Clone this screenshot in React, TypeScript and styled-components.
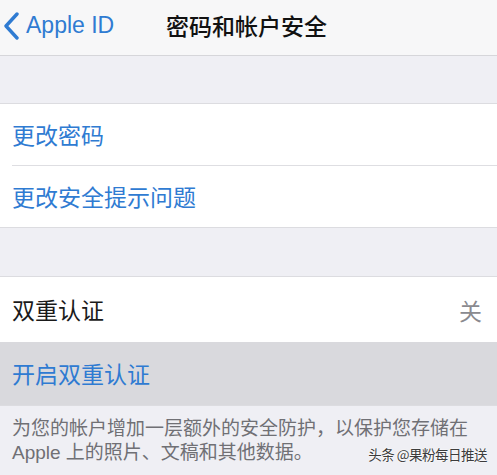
import React from "react";
import styled, { createGlobalStyle } from "styled-components";

const Global = createGlobalStyle`
  html, body { margin: 0; padding: 0; background: #efeff4; }
  body { font-family: "Liberation Sans", "Noto Sans CJK SC", sans-serif; width: 497px; height: 475px; overflow: hidden; }
  * { box-sizing: border-box; }
`;

const Screen = styled.div`
  position: relative;
  width: 497px;
  height: 475px;
  background: #efeff4;
  display: flex;
  flex-direction: column;
`;

const NavBar = styled.div`
  height: 56px;
  background: #f7f7f8;
  border-bottom: 1px solid #d6d6da;
  display: grid;
  grid-template-columns: 1fr auto 1fr;
  align-items: center;
`;

const Back = styled.div`
  display: flex;
  align-items: center;
  gap: 6px;
  padding-left: 3px;
  color: #2f7bd2;
  font-family: "Liberation Sans", sans-serif;
  font-size: 23px;
  margin-top: -4px;
`;

const Title = styled.div`
  font-family: "Noto Sans CJK SC", sans-serif;
  font-size: 23px;
  font-weight: 500;
  color: #111;
  margin-top: -6px;
  margin-left: -4px;
`;

const Gap = styled.div<{ $h: number }>`
  height: ${(p) => p.$h}px;
  flex-shrink: 0;
`;

const Group = styled.div`
  background: #fff;
  border-top: 1px solid #dcdce0;
  border-bottom: 1px solid #dcdce0;
  display: flex;
  flex-direction: column;
`;

const Row = styled.div<{ $h: number; $sel?: boolean; $divider?: boolean }>`
  height: ${(p) => p.$h}px;
  display: flex;
  align-items: center;
  justify-content: space-between;
  padding: 0 15px 0 12px;
  background: ${(p) => (p.$sel ? "#d9d9dd" : "#fff")};
  position: relative;
  ${(p) =>
    p.$divider
      ? `&::after { content: ""; position: absolute; left: 12px; right: 0; bottom: 0; height: 1px; background: #dedee2; }`
      : ""}
`;

const Label = styled.span<{ $blue?: boolean }>`
  font-family: "Noto Sans CJK SC", sans-serif;
  font-size: 23px;
  color: ${(p) => (p.$blue ? "#2f7bd2" : "#1a1a1a")};
  margin-top: -2px;
`;

const Value = styled.span`
  font-family: "Noto Sans CJK SC", sans-serif;
  font-size: 23px;
  color: #8a8a8f;
`;

const Footer = styled.div`
  padding: 11px 12px 0 12px;
  font-family: "Liberation Sans", "Noto Sans CJK SC", sans-serif;
  font-size: 19px;
  line-height: 24px;
  color: #707075;
`;

const Watermark = styled.div`
  position: absolute;
  right: 10px;
  bottom: 11px;
  font-family: "Noto Sans CJK SC", sans-serif;
  font-size: 13.5px;
  color: #3c3c3c;
  text-shadow: 0 0 2px #fff, 0 0 2px #fff;
  letter-spacing: -0.5px;
`;

export default function App() {
  return (
    <>
      <Global />
      <Screen>
        <NavBar>
          <Back>
            <svg width="17" height="28" viewBox="0 0 17 28">
              <path d="M14 2 L3 14 L14 26" fill="none" stroke="#2f7bd2" strokeWidth="3.4" strokeLinecap="round" strokeLinejoin="round" />
            </svg>
            Apple ID
          </Back>
          <Title>密码和帐户安全</Title>
          <div />
        </NavBar>
        <Gap $h={47} />
        <Group>
          <Row $h={62} $divider>
            <Label $blue>更改密码</Label>
          </Row>
          <Row $h={61}>
            <Label $blue>更改安全提示问题</Label>
          </Row>
        </Group>
        <Gap $h={48} />
        <Group>
          <Row $h={65}>
            <Label>双重认证</Label>
            <Value>关</Value>
          </Row>
          <Row $h={63} $sel>
            <Label $blue>开启双重认证</Label>
          </Row>
        </Group>
        <Footer>
          为您的帐户增加一层额外的安全防护，以保护您存储在
          <br />
          Apple 上的照片、文稿和其他数据。
        </Footer>
        <Watermark>头条 @果粉每日推送</Watermark>
      </Screen>
    </>
  );
}
